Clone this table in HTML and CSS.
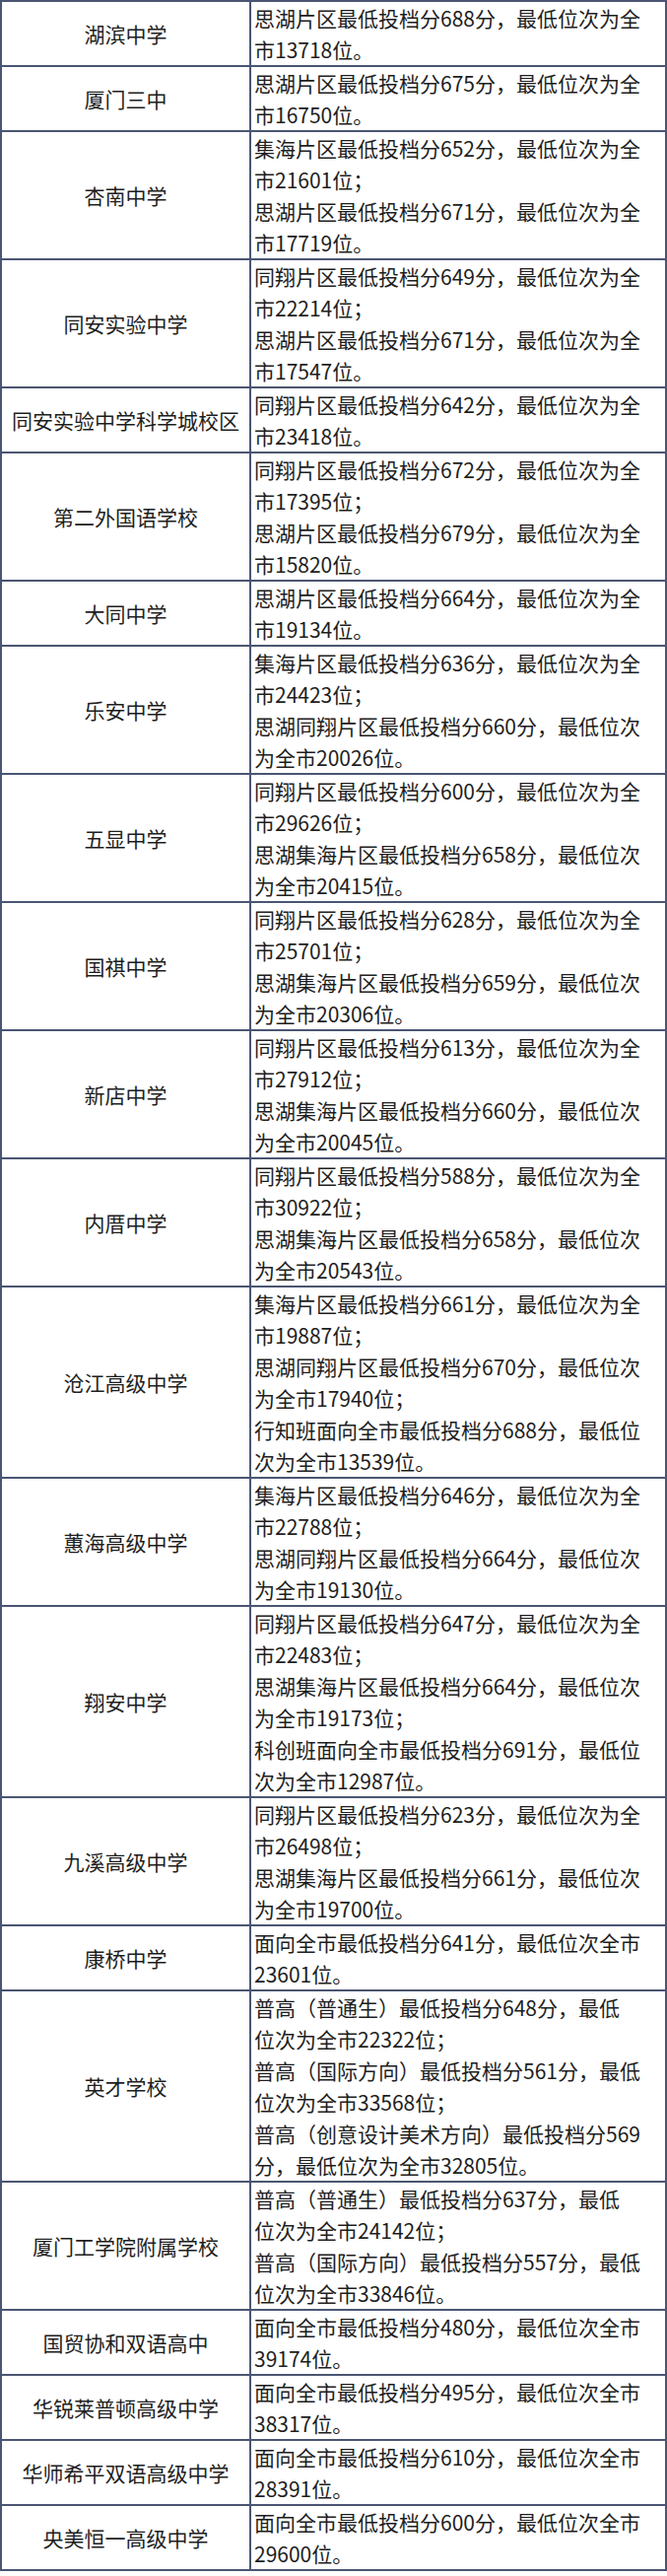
FILE: index.html
```html
<!DOCTYPE html>
<html lang="zh">
<head>
<meta charset="utf-8">
<title>投档分数线</title>
<link rel="stylesheet" href="styles.css">
</head>
<body>
<div class="table">
  <div class="name">湖滨中学</div>
  <div class="info">思湖片区最低投档分688分，最低位次为全<br>市13718位。</div>

  <div class="name">厦门三中</div>
  <div class="info">思湖片区最低投档分675分，最低位次为全<br>市16750位。</div>

  <div class="name">杏南中学</div>
  <div class="info">集海片区最低投档分652分，最低位次为全<br>市21601位；<br>思湖片区最低投档分671分，最低位次为全<br>市17719位。</div>

  <div class="name">同安实验中学</div>
  <div class="info">同翔片区最低投档分649分，最低位次为全<br>市22214位；<br>思湖片区最低投档分671分，最低位次为全<br>市17547位。</div>

  <div class="name">同安实验中学科学城校区</div>
  <div class="info">同翔片区最低投档分642分，最低位次为全<br>市23418位。</div>

  <div class="name">第二外国语学校</div>
  <div class="info">同翔片区最低投档分672分，最低位次为全<br>市17395位；<br>思湖片区最低投档分679分，最低位次为全<br>市15820位。</div>

  <div class="name">大同中学</div>
  <div class="info">思湖片区最低投档分664分，最低位次为全<br>市19134位。</div>

  <div class="name">乐安中学</div>
  <div class="info">集海片区最低投档分636分，最低位次为全<br>市24423位；<br>思湖同翔片区最低投档分660分，最低位次<br>为全市20026位。</div>

  <div class="name">五显中学</div>
  <div class="info">同翔片区最低投档分600分，最低位次为全<br>市29626位；<br>思湖集海片区最低投档分658分，最低位次<br>为全市20415位。</div>

  <div class="name">国祺中学</div>
  <div class="info">同翔片区最低投档分628分，最低位次为全<br>市25701位；<br>思湖集海片区最低投档分659分，最低位次<br>为全市20306位。</div>

  <div class="name">新店中学</div>
  <div class="info">同翔片区最低投档分613分，最低位次为全<br>市27912位；<br>思湖集海片区最低投档分660分，最低位次<br>为全市20045位。</div>

  <div class="name">内厝中学</div>
  <div class="info">同翔片区最低投档分588分，最低位次为全<br>市30922位；<br>思湖集海片区最低投档分658分，最低位次<br>为全市20543位。</div>

  <div class="name">沧江高级中学</div>
  <div class="info">集海片区最低投档分661分，最低位次为全<br>市19887位；<br>思湖同翔片区最低投档分670分，最低位次<br>为全市17940位；<br>行知班面向全市最低投档分688分，最低位<br>次为全市13539位。</div>

  <div class="name">蕙海高级中学</div>
  <div class="info">集海片区最低投档分646分，最低位次为全<br>市22788位；<br>思湖同翔片区最低投档分664分，最低位次<br>为全市19130位。</div>

  <div class="name">翔安中学</div>
  <div class="info">同翔片区最低投档分647分，最低位次为全<br>市22483位；<br>思湖集海片区最低投档分664分，最低位次<br>为全市19173位；<br>科创班面向全市最低投档分691分，最低位<br>次为全市12987位。</div>

  <div class="name">九溪高级中学</div>
  <div class="info">同翔片区最低投档分623分，最低位次为全<br>市26498位；<br>思湖集海片区最低投档分661分，最低位次<br>为全市19700位。</div>

  <div class="name">康桥中学</div>
  <div class="info">面向全市最低投档分641分，最低位次全市<br>23601位。</div>

  <div class="name">英才学校</div>
  <div class="info">普高（普通生）最低投档分648分，最低<br>位次为全市22322位；<br>普高（国际方向）最低投档分561分，最低<br>位次为全市33568位；<br>普高（创意设计美术方向）最低投档分569<br>分，最低位次为全市32805位。</div>

  <div class="name">厦门工学院附属学校</div>
  <div class="info">普高（普通生）最低投档分637分，最低<br>位次为全市24142位；<br>普高（国际方向）最低投档分557分，最低<br>位次为全市33846位。</div>

  <div class="name">国贸协和双语高中</div>
  <div class="info">面向全市最低投档分480分，最低位次全市<br>39174位。</div>

  <div class="name">华锐莱普顿高级中学</div>
  <div class="info">面向全市最低投档分495分，最低位次全市<br>38317位。</div>

  <div class="name">华师希平双语高级中学</div>
  <div class="info">面向全市最低投档分610分，最低位次全市<br>28391位。</div>

  <div class="name">央美恒一高级中学</div>
  <div class="info">面向全市最低投档分600分，最低位次全市<br>29600位。</div>
</div>
</body>
</html>
```

FILE: styles.css
```css
html, body {
  margin: 0;
  padding: 0;
  background: #ffffff;
}

body {
  font-family: "Noto Sans CJK SC", "Noto Sans", sans-serif;
  font-size: 21px;
  line-height: 32px;
  color: #1e1e1e;
}

.table {
  box-sizing: border-box;
  width: 677px;
  display: grid;
  grid-template-columns: 251px 1fr;
  gap: 2px;
  padding: 2px;
  background: #4a5572;
}

.name {
  background: #ffffff;
  display: flex;
  align-items: center;
  justify-content: center;
  text-align: center;
  white-space: nowrap;
}

.info {
  background: #ffffff;
  padding: 0 4px 0 3px;
  white-space: nowrap;
}
```
